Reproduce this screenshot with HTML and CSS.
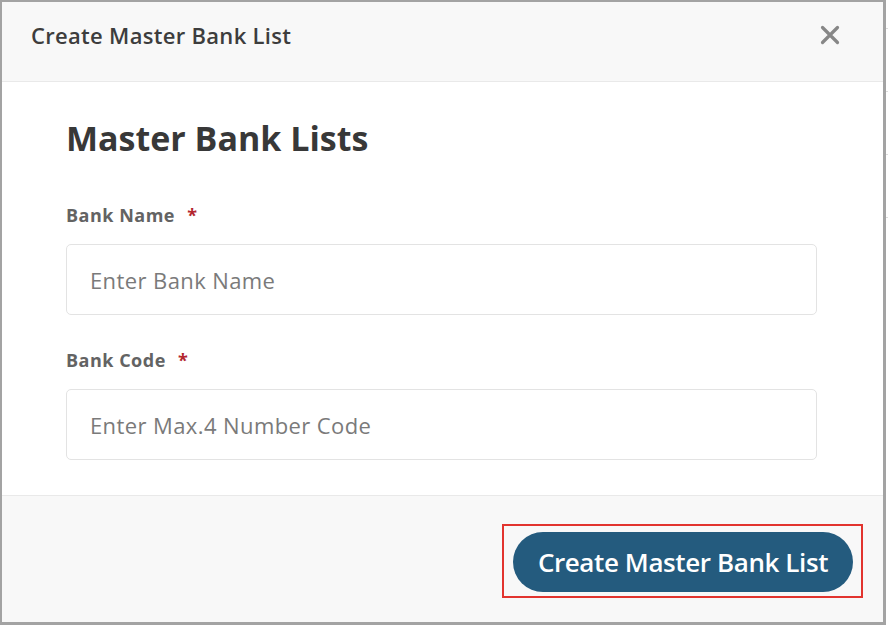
FILE: index.html
```html
<!DOCTYPE html>
<html>
<head>
<meta charset="utf-8">
<link rel="stylesheet" href="styles.css">
</head>
<body>
<div class="page">
  <div class="modal">
    <div class="modal-header">
      <h2 class="modal-title">Create Master Bank List</h2>
      <button class="close" aria-label="Close">
        <svg width="20" height="20" viewBox="0 0 20 20"><path d="M2.5 2.5 L17.5 17.5 M17.5 2.5 L2.5 17.5" stroke="#878787" stroke-width="3.2" stroke-linecap="round"/></svg>
      </button>
    </div>
    <div class="modal-body">
      <h1 class="heading">Master Bank Lists</h1>
      <div class="field">
        <label class="label">Bank Name <span class="req">*</span></label>
        <input class="input" type="text" placeholder="Enter Bank Name">
      </div>
      <div class="field">
        <label class="label">Bank Code <span class="req">*</span></label>
        <input class="input" type="text" placeholder="Enter Max.4 Number Code">
      </div>
    </div>
    <div class="modal-footer">
      <div class="highlight">
        <button class="btn-primary">Create Master Bank List</button>
      </div>
    </div>
  </div>
  <div class="strip">
    <span class="tick t1"></span>
    <span class="tick t2"></span>
    <span class="tick t3"></span>
    <span class="tick t4"></span>
  </div>
</div>
</body>
</html>
```

FILE: styles.css
```css
* { box-sizing: border-box; }
html, body { margin: 0; padding: 0; background: #ffffff; }
body { font-family: "Open Sans", "Lato", sans-serif; }

.page {
  display: flex;
  width: 888px;
  height: 626px;
}

.modal {
  width: 886px;
  height: 625px;
  border-style: solid;
  border-color: #a3a3a3;
  border-width: 2px 3px 3px 2px;
  display: flex;
  flex-direction: column;
  background: #fff;
}

.strip {
  flex: 1;
  display: flex;
  flex-direction: column;
  padding-top: 28px;
  gap: 62px;
}
.tick { display: block; height: 1px; background: #dcdcdc; }

.modal-header {
  height: 80px;
  background: #f8f8f8;
  border-bottom: 1px solid #e9e9e9;
  display: flex;
  align-items: center;
  justify-content: space-between;
  padding: 0 43px 13px 29px;
}
.modal-title {
  margin: 0;
  font-size: 22px;
  font-weight: 600;
  color: #3d3d3d;
  letter-spacing: 0.3px;
  line-height: 28px;
}
.close {
  border: 0;
  background: transparent;
  padding: 0;
  width: 20px;
  height: 20px;
  display: flex;
}

.modal-body {
  flex: 1;
  padding: 36px 66px 0 64px;
  border-bottom: 1px solid #e9e9e9;
}
.heading {
  margin: 0 0 46px;
  font-size: 34px;
  font-weight: 700;
  color: #383838;
  line-height: 40px;
}
.field { display: flex; flex-direction: column; margin-bottom: 34px; }
.label {
  font-size: 18px;
  font-weight: 700;
  color: #636363;
  line-height: 22px;
  margin-bottom: 18px;
  letter-spacing: 0.5px;
}
.req { color: #b3262e; margin-left: 7px; }
.input {
  height: 71px;
  width: 100%;
  border: 1px solid #e3e3e3;
  border-radius: 5px;
  padding: 0 23px;
  font-family: "Open Sans", "Lato", sans-serif;
  font-size: 22px;
  letter-spacing: 0.4px;
  color: #333;
  outline: none;
}
.input::placeholder { color: #7a7a7a; }

.modal-footer {
  height: 126px;
  background: #f8f8f8;
  display: flex;
  justify-content: flex-end;
  align-items: flex-start;
  padding: 28px 20px 0 0;
}
.highlight {
  border: 2px solid #e2342e;
  padding: 6px 8px 4px 9px;
}
.btn-primary {
  display: block;
  width: 340px;
  height: 60px;
  border: 0;
  border-radius: 30px;
  background: #245b7e;
  color: #ffffff;
  font-family: "Open Sans", "Lato", sans-serif;
  font-size: 26px;
  font-weight: 600;
  letter-spacing: -0.4px;
}
```
